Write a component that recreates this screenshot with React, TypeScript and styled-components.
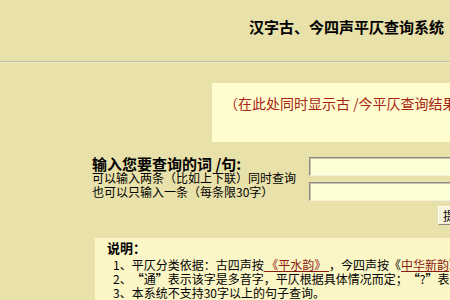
import styled, { createGlobalStyle } from "styled-components";

const GlobalStyle = createGlobalStyle`
  html, body {
    margin: 0;
    padding: 0;
    background: #e9e1aa;
    overflow: hidden;
  }
  body {
    font-family: "Noto Sans CJK SC", "Liberation Sans", sans-serif;
    color: #000;
  }
`;

const Page = styled.div`
  width: 450px;
  height: 300px;
  overflow: hidden;
  background: #e9e1aa;
`;

const Header = styled.div`
  height: 61px;
  box-sizing: border-box;
  padding: 18px 0 0 249px;
`;

const Title = styled.h1`
  margin: 0;
  font-size: 15px;
  line-height: 18px;
  font-weight: bold;
  white-space: nowrap;
`;

const Rule = styled.hr`
  margin: 0;
  height: 0;
  border: 0;
  border-top: 1px solid #c2bda4;
  border-bottom: 1px solid #f3edc4;
`;

const ResultBox = styled.div`
  margin: 20px 0 0 212px;
  width: 300px;
  height: 59px;
  box-sizing: border-box;
  padding: 11px 0 0 12px;
  background: #fffdcf;
`;

const ResultText = styled.div`
  font-size: 14px;
  line-height: 18px;
  color: #a82414;
  white-space: nowrap;
`;

const QueryRow = styled.div`
  display: flex;
  margin-top: 14px;
  padding-left: 92px;
`;

const Prompt = styled.div`
  width: 217px;
  flex-shrink: 0;
`;

const PromptTitle = styled.div`
  font-size: 15px;
  line-height: 15px;
  font-weight: bold;
  white-space: nowrap;
`;

const PromptLine = styled.div`
  font-size: 12px;
  line-height: 14px;
  white-space: nowrap;
`;

const Fields = styled.div`
  display: flex;
  flex-direction: column;
  gap: 6px;
  padding-top: 1px;
`;

const TextField = styled.input`
  width: 220px;
  height: 19px;
  box-sizing: border-box;
  margin: 0;
  padding: 0 3px;
  background: #ffffd6;
  border: 1px solid;
  border-color: #8c8a80 #f4f0d8 #f4f0d8 #8c8a80;
  box-shadow: inset 1px 1px 0 #c8c4b0;
  outline: none;
  font-size: 12px;
`;

const SubmitRow = styled.div`
  display: flex;
  padding: 5px 0 0 438px;
`;

const SubmitButton = styled.button`
  height: 19px;
  flex-shrink: 0;
  margin: 0;
  padding: 0 4px;
  background: #f6f2dc;
  border: 1px solid;
  border-color: #fffff0 #8c8a80 #8c8a80 #fffff0;
  font-family: inherit;
  font-size: 12px;
  line-height: 16px;
  white-space: nowrap;
  color: #000;
`;

const Notes = styled.div`
  margin: 13px 0 0 95px;
  width: 420px;
  height: 70px;
  box-sizing: border-box;
  padding: 3px 0 0 12px;
  background: #fbf6c6;
`;

const NotesTitle = styled.div`
  font-size: 13px;
  line-height: 14px;
  font-weight: bold;
`;

const NoteList = styled.div`
  padding: 3px 0 0 6px;
`;

const NoteItem = styled.div`
  font-size: 12px;
  line-height: 14px;
  white-space: nowrap;
`;

const Quote = styled.b`
  display: inline-block;
  width: 12px;
  text-align: center;
  line-height: 14px;
`;

const RhymeLink = styled.a`
  color: #8a1a10;
  text-decoration: underline;
`;

export default function App() {
  return (
    <Page>
      <GlobalStyle />
      <Header>
        <Title>汉字古、今四声平仄查询系统</Title>
      </Header>
      <Rule />
      <ResultBox>
        <ResultText>（在此处同时显示古 /今平仄查询结果）</ResultText>
      </ResultBox>
      <QueryRow>
        <Prompt>
          <PromptTitle>输入您要查询的词 /句:</PromptTitle>
          <PromptLine>可以输入两条（比如上下联）同时查询</PromptLine>
          <PromptLine>也可以只输入一条（每条限30字）</PromptLine>
        </Prompt>
        <Fields>
          <TextField type="text" />
          <TextField type="text" />
        </Fields>
      </QueryRow>
      <SubmitRow>
        <SubmitButton>提交查询</SubmitButton>
      </SubmitRow>
      <Notes>
        <NotesTitle>说明：</NotesTitle>
        <NoteList>
          <NoteItem>
            1、平仄分类依据：古四声按<RhymeLink href="#"> 《平水韵》 </RhymeLink>，今四声按《<RhymeLink href="#">中华新韵</RhymeLink>》
          </NoteItem>
          <NoteItem>
            2、<Quote>“</Quote>通<Quote>”</Quote>表示该字是多音字，平仄根据具体情况而定；<Quote>“</Quote>?<Quote>”</Quote>表示
          </NoteItem>
          <NoteItem>3、本系统不支持30字以上的句子查询。</NoteItem>
        </NoteList>
      </Notes>
    </Page>
  );
}
